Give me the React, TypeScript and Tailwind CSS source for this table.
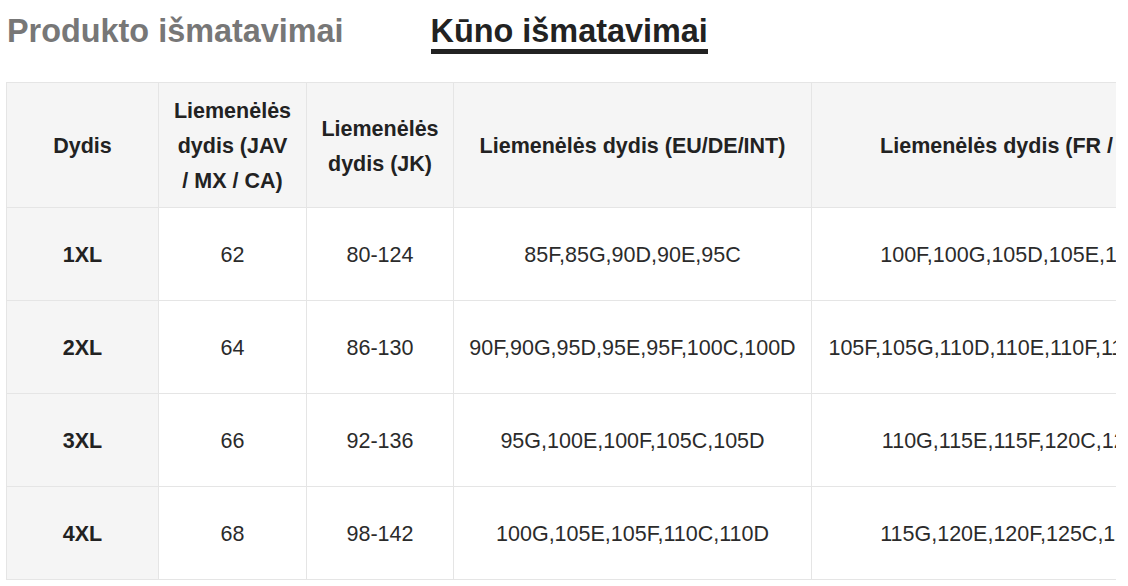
const headers = [
  { label: "Dydis", w: "w-[152px]" },
  { label: "Liemenėlės dydis (JAV / MX / CA)", w: "w-[148px]" },
  { label: "Liemenėlės dydis (JK)", w: "w-[147px]" },
  { label: "Liemenėlės dydis (EU/DE/INT)", w: "w-[358px]" },
  { label: "Liemenėlės dydis (FR / ES)", w: "w-[412px]" },
  { label: "Liemenėlės dydis (AU/NZ)", w: "w-[300px]" },
];

const rows = [
  ["1XL", "62", "80-124", "85F,85G,90D,90E,95C", "100F,100G,105D,105E,110C", "14DD,14E,16D"],
  ["2XL", "64", "86-130", "90F,90G,95D,95E,95F,100C,100D", "105F,105G,110D,110E,110F,115C,115D", "16DD,16E,18D"],
  ["3XL", "66", "92-136", "95G,100E,100F,105C,105D", "110G,115E,115F,120C,120D", "18DD,20D"],
  ["4XL", "68", "98-142", "100G,105E,105F,110C,110D", "115G,120E,120F,125C,125D", "20DD,22D"],
];

export default function App() {
  return (
    <div className="w-[1128px] h-[586px] bg-white overflow-hidden font-['Liberation_Sans',Arial,sans-serif]">
      <div className="flex gap-[87px] pl-[7px] pt-[14px] text-[32.4px] font-bold">
        <span className="leading-[34px] text-[#777777]">Produkto išmatavimai</span>
        <span className="leading-[34px] pb-[1px] text-[#222222] border-b-[5px] border-[#222222]">Kūno išmatavimai</span>
      </div>

      <div className="ml-[6px] mt-[28px] w-[1110px] overflow-hidden">
        <table className="table-fixed border-collapse w-[1517px] text-[21.5px]">
          <thead>
            <tr>
              {headers.map((h) => (
                <th
                  key={h.label}
                  className={`${h.w} border border-[#e5e5e5] bg-[#f5f5f5] px-[14px] pt-[11px] pb-[8px] leading-[35px] font-bold text-[#222222] text-center align-middle`}
                >
                  {h.label}
                </th>
              ))}
            </tr>
          </thead>
          <tbody>
            {rows.map((r) => (
              <tr key={r[0]} className="h-[93px]">
                {r.map((c, i) => (
                  <td
                    key={i}
                    className={`border border-[#e5e5e5] px-[12px] pt-[3px] text-center align-middle leading-[35px] whitespace-nowrap ${
                      i === 0 ? "bg-[#f5f5f5] font-bold text-[#222222]" : "text-[#2b2b2b]"
                    }`}
                  >
                    {c}
                  </td>
                ))}
              </tr>
            ))}
          </tbody>
        </table>
      </div>
    </div>
  );
}
